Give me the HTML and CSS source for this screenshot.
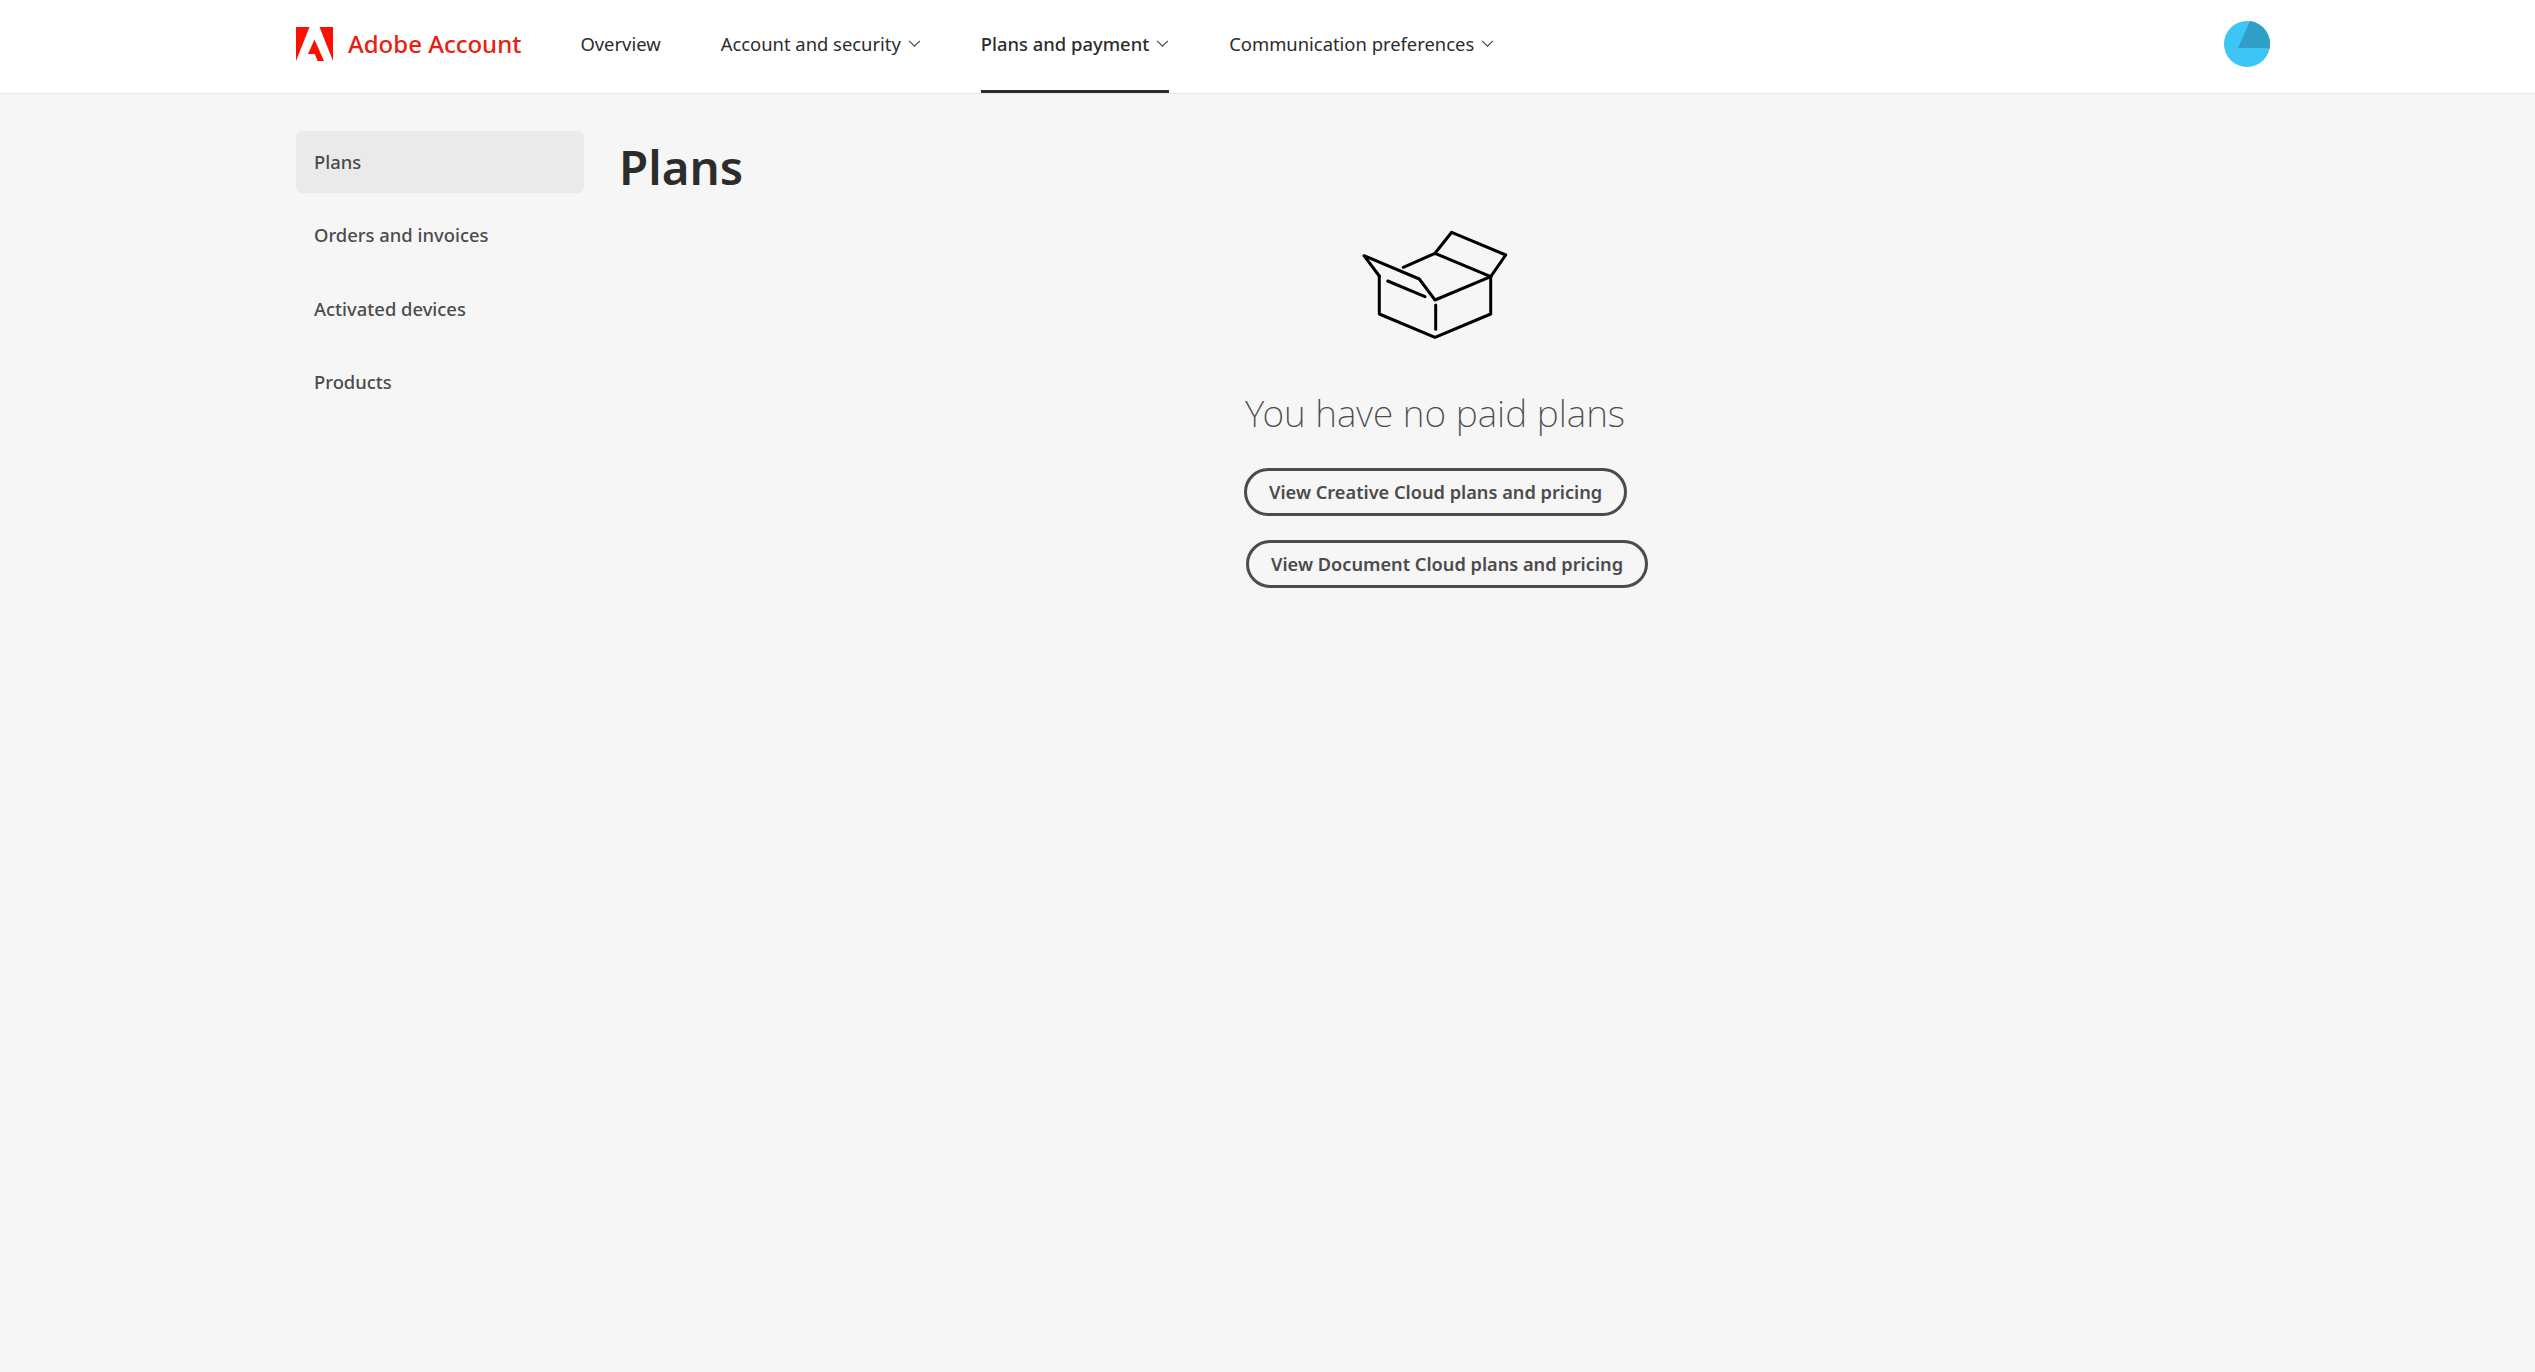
FILE: index.html
```html
<!DOCTYPE html>
<html lang="en">
<head>
    <meta charset="utf-8" />
    <title>Plans - Adobe Account</title>
    <link rel="stylesheet" href="styles.css">
</head>
<body>
    <header class="topbar">
        <a class="brand" href="#">
            <svg class="brand-logo" viewBox="0 0 37 34" preserveAspectRatio="none">
                <path d="M0 0H13.500L0 34Z" />
                <path d="M23.500 0H37V34Z" />
                <path d="M18.500 12.500L28 34H21.500L18.800 27H12Z" />
            </svg>
            <span class="brand-name">Adobe Account</span>
        </a>
        <nav class="topnav">
            <a class="topnav-item" href="#">Overview</a>
            <a class="topnav-item" href="#">Account and security
                <svg class="chevron" viewBox="0 0 12 8"><path d="M1 1.500L6 6.500L11 1.500" /></svg>
            </a>
            <a class="topnav-item active" href="#">Plans and payment
                <svg class="chevron" viewBox="0 0 12 8"><path d="M1 1.500L6 6.500L11 1.500" /></svg>
            </a>
            <a class="topnav-item" href="#">Communication preferences
                <svg class="chevron" viewBox="0 0 12 8"><path d="M1 1.500L6 6.500L11 1.500" /></svg>
            </a>
        </nav>
        <svg class="avatar" viewBox="0 0 46 46">
            <circle cx="23" cy="23" r="23" fill="#3cc5f5" />
            <path d="M26 0A23 23 0 0 1 45.500 28L43 27H14Z" fill="#2f9fc6" />
        </svg>
    </header>

    <div class="layout">
        <aside class="sidebar">
            <a class="side-item active" href="#">Plans</a>
            <a class="side-item" href="#">Orders and invoices</a>
            <a class="side-item" href="#">Activated devices</a>
            <a class="side-item" href="#">Products</a>
        </aside>
        <main class="content">
            <h1>Plans</h1>
            <div class="empty">
                <svg class="box-icon" viewBox="5 0 180 130">
                    <path d="M39.300 56V94L95 117.300L150.700 94V56.700" />
                    <path d="M39.300 56L24 35.700L79.300 59L95 80L150.700 56.700" />
                    <path d="M63.300 47.300L95 33.300L150.700 56.700" />
                    <path d="M95 33.300L111.700 12.300L165.700 35L150.700 56.700" />
                    <path d="M47.700 61L85 76.700" />
                    <path d="M95.700 85V109.300" />
                </svg>
                <h2>You have no paid plans</h2>
                <div class="actions">
                    <a class="pill" href="#">View Creative Cloud plans and pricing</a>
                    <a class="pill second" href="#">View Document Cloud plans and pricing</a>
                </div>
            </div>
        </main>
    </div>
</body>
</html>
```

FILE: styles.css
```css
* {
    box-sizing: border-box;
}

body {
    font-family: "Noto Sans", "Open Sans", sans-serif;
    margin: 0;
    min-height: 100vh;
    background-color: #f6f6f6;
    color: #2c2c2c;
}

a {
    color: inherit;
    text-decoration: none;
}

.topbar {
    display: flex;
    align-items: center;
    height: 94px;
    padding: 0 265px 6px 296px;
    background-color: #fff;
    border-bottom: 1px solid #eaeaea;
}

.brand {
    display: flex;
    align-items: center;
    gap: 15px;
    margin-right: 59px;
}

.brand-logo {
    width: 37px;
    height: 34px;
    fill: #fa0f00;
}

.brand-name {
    font-size: 24px;
    font-weight: 500;
    color: #e8200f;
}

.topnav {
    display: flex;
    gap: 60px;
    flex: 1;
    margin-bottom: -6px;
}

.topnav-item {
    display: flex;
    align-items: center;
    gap: 7px;
    height: 92px;
    padding-bottom: 3px;
    font-size: 18.4px;
    border-bottom: 3px solid transparent;
}

.topnav-item.active {
    font-weight: 500;
    border-bottom-color: #2c2c2c;
}

.chevron {
    width: 13px;
    height: 9px;
    fill: none;
    stroke: #444;
    stroke-width: 1;
}

.avatar {
    width: 46px;
    height: 46px;
}

.layout {
    display: flex;
    gap: 35px;
    padding: 37px 0 0 296px;
}

.sidebar {
    display: flex;
    flex-direction: column;
    gap: 11.500px;
    width: 288px;
}

.side-item {
    display: flex;
    align-items: center;
    height: 62px;
    padding: 0 0 2px 18px;
    font-size: 18.4px;
    font-weight: 500;
    color: #4b4b4b;
    border-radius: 6px;
}

.side-item.active {
    background-color: #eaeaea;
}

.content {
    width: 1632px;
}

h1 {
    margin: 0;
    font-size: 47.5px;
    font-weight: 600;
    line-height: 72px;
    color: #2c2c2c;
}

.empty {
    display: flex;
    flex-direction: column;
    align-items: center;
    margin-top: 17px;
}

.box-icon {
    width: 180px;
    height: 130px;
    fill: none;
    stroke: #000;
    stroke-width: 3;
    stroke-linejoin: round;
    stroke-linecap: round;
}

h2 {
    margin: 38px 0 0;
    font-size: 37.2px;
    font-weight: 200;
    line-height: 50px;
    color: #4b4b4b;
}

.actions {
    display: flex;
    flex-direction: column;
    align-items: flex-start;
    gap: 24px;
    width: 382px;
    margin-top: 30px;
}

.pill {
    display: flex;
    align-items: center;
    flex-shrink: 0;
    height: 48px;
    padding: 0 22px;
    font-size: 18.2px;
    font-weight: 600;
    white-space: nowrap;
    color: #4b4b4b;
    border: 3px solid #4b4b4b;
    border-radius: 24px;
}

.pill.second {
    margin-left: 2px;
}
```
